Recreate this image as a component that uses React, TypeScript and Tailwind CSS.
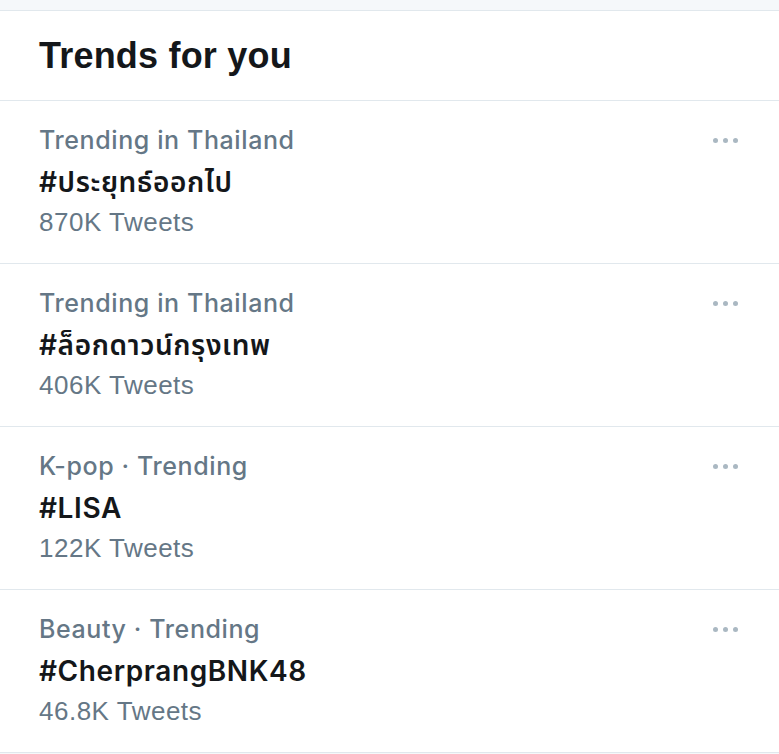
const trends = [
  { category: 'Trending in Thailand', title: '#ประยุทธ์ออกไป', count: '870K Tweets' },
  { category: 'Trending in Thailand', title: '#ล็อกดาวน์กรุงเทพ', count: '406K Tweets' },
  { category: 'K-pop · Trending', title: '#LISA', count: '122K Tweets' },
  { category: 'Beauty · Trending', title: '#CherprangBNK48', count: '46.8K Tweets' },
];

function MoreDots() {
  return (
    <div className="flex gap-[5px]">
      <span className="w-[5px] h-[5px] rounded-full bg-[#aab8c2]" />
      <span className="w-[5px] h-[5px] rounded-full bg-[#aab8c2]" />
      <span className="w-[5px] h-[5px] rounded-full bg-[#aab8c2]" />
    </div>
  );
}

export default function App() {
  return (
    <div className="w-[779px] h-[754px] overflow-hidden bg-[#f5f8fa] pt-[10px] font-['Liberation_Sans','Noto_Sans',sans-serif]">
      <div className="bg-white border-t border-[#e1e8ed]">
        {/* Header */}
        <div className="h-[90px] flex items-center px-[39px] border-b border-[#e1e8ed]">
          <h1 className="text-[36px] font-bold text-[#14171a] tracking-[0.2px]">Trends for you</h1>
        </div>

        {/* Trend rows */}
        {trends.map((t, i) => (
          <div key={i} className="h-[163px] pt-[19px] pl-[39px] pr-[41px] border-b border-[#e1e8ed] flex justify-between">
            <div>
              <div className="h-[40px] leading-[40px] text-[25px] font-medium text-[#657786] font-['Inter','Noto_Sans',sans-serif] tracking-[0.6px]">
                {t.category}
              </div>
              <div className="h-[44px] leading-[44px] text-[28px] font-semibold text-[#14171a] font-['Inter','Noto_Sans_Thai','Noto_Sans',sans-serif] tracking-[0.6px]">
                {t.title}
              </div>
              <div className="h-[36px] leading-[36px] text-[26px] text-[#657786] tracking-[0.5px]">
                {t.count}
              </div>
            </div>
            <div className="h-[40px] flex items-center">
              <MoreDots />
            </div>
          </div>
        ))}
      </div>
    </div>
  );
}
